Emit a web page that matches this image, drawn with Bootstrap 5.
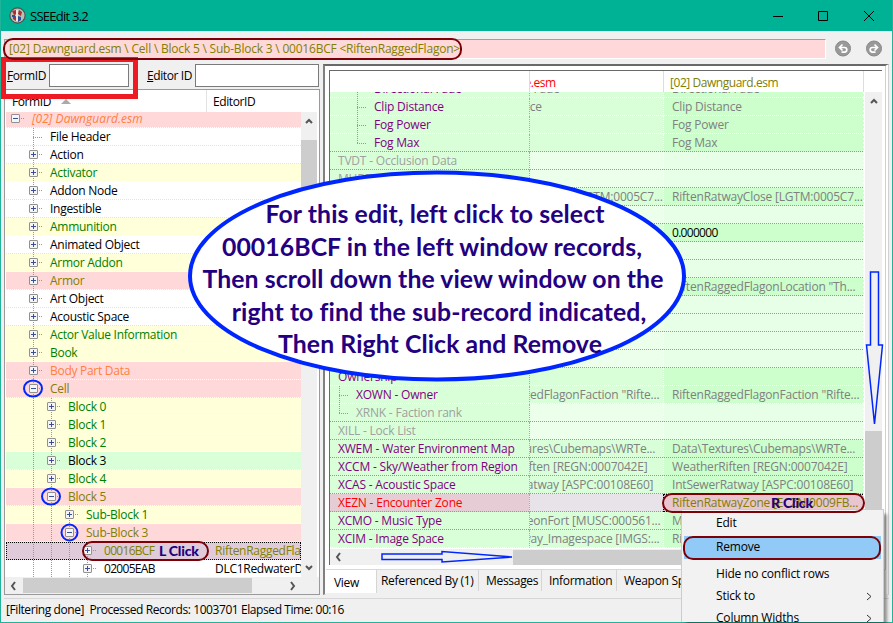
<!DOCTYPE html>
<html lang="en">
<head>
<meta charset="utf-8">
<title>SSEEdit 3.2</title>
<link rel="stylesheet" href="https://cdn.jsdelivr.net/npm/bootstrap@5.3.0/dist/css/bootstrap.min.css">
<style>
*{box-sizing:border-box}
body{width:893px;height:623px;overflow:hidden;background:#f0f0f0;font:12px/18px "Open Sans","Noto Sans",sans-serif;color:#000;letter-spacing:-.2px;white-space:nowrap}
.win{width:893px;height:623px;border:1px solid #1fb39a;border-top:0;background:#f0f0f0}
.titlebar{height:31px;background:#00b295;padding-left:8px;font-size:13px;flex:none;letter-spacing:-.75px}
.pathbar{height:31px;padding:8px 10px 0 3px;flex:none}
.pathfield{width:822px;height:20px;background:#ffd9d9;border-top:1px solid #a0a0a0;border-left:1px solid #a0a0a0;border-right:1px solid #fff;border-bottom:1px solid #fff;color:#808000;padding-left:4px;line-height:18px;letter-spacing:-.21px}
.leftcol{width:316px;margin-left:3px;flex:none}
.filters{height:27px;padding:2px 0 0 3px;letter-spacing:-.4px}
.inp{height:23px;background:#fff;border:1px solid #7a7a7a}
.treebox{height:506px;border:1px solid #9a9a9a;background:#fff;width:316px}
.treehead{height:22px;line-height:23px;padding-left:7px;letter-spacing:-.4px}
.treehead .c2{margin-left:auto;width:113px;border-left:1px solid #e2e2e2;padding-left:6px}
.tree{height:465px;width:296px;overflow:hidden;padding-left:1px;letter-spacing:-.28px}
.trow{height:18px;border-bottom:1px dotted #e4e4e4;overflow:hidden;line-height:18px}
.trow:first-child{margin-top:-2px;letter-spacing:.05px}
.trow.bg-s{outline:1px dotted #000;outline-offset:-1px}
.bg-y{background:#ffffd9}.bg-p{background:#ffd9d9}.bg-g{background:#d9ffd9}.bg-s{background:#dfcbd9}
.bg-p,.bg-g,.bg-y{border-bottom-color:#fff}
.t-g{color:#008000}.t-o{color:#808000}.t-c{color:#ff8040}.t-p{color:#800080}.t-r{color:#f00}.t-x{color:#a0a0a0}.t-d{color:#808080}
.hexid{letter-spacing:-.7px}
.guide{width:18px;height:18px;flex:none;background:repeating-linear-gradient(#999 0 1px,transparent 1px 2px) 9px 0/1px 18px no-repeat}
.guide.none{background:none}
.stub{width:8px;height:18px;flex:none}
.knobcell{position:relative}
.knobcell::after{content:"";display:block;width:5px;height:1px;margin:-5px 0 0 14px;background:repeating-linear-gradient(90deg,transparent 0 1px,#999 1px 2px)}
.leaf{background:repeating-linear-gradient(#999 0 1px,transparent 1px 2px) 9px 0/1px 18px no-repeat,repeating-linear-gradient(90deg,#999 0 1px,transparent 1px 2px) 9px 9px/9px 1px no-repeat}
.leaf.last{background-size:1px 9px,9px 1px}
.knob{width:9px;height:9px;margin:4px 0 0 5px;border:1px solid #919191;border-radius:1px;background:linear-gradient(#3a4f9a,#3a4f9a) 1px 3px/5px 1px no-repeat,linear-gradient(#3a4f9a,#3a4f9a) 3px 1px/1px 5px no-repeat,#f5f5f5}
.knob.minus{background:linear-gradient(#3a4f9a,#3a4f9a) 1px 3px/5px 1px no-repeat,#f5f5f5}
.tname{width:0;flex:1 1 0}
.tedit{width:86px;flex:none;overflow:hidden}
.sb{background:#f0f0f0;flex:none}
.thumb{background:#cdcdcd}
.rightcol{margin:2px 0 0 3px;width:566px;height:531px;border-top:2px solid #696969;border-left:2px solid #808080;background:#fff;padding:4px 0 0 4px;border-bottom:1px solid #ddd;border-right:4px double #d0d0d0}
.view{border-top:1px solid #696969;border-left:1px solid #696969;width:553px;height:495px}
.vhead{height:21px;line-height:23px;flex:none;letter-spacing:-.45px}
.rgrid{height:457px;width:535px;overflow:hidden}
.grow{height:18px;line-height:18px}
.grow:first-child{margin-top:-12px}
.grow>div{border-bottom:1px dotted #999;overflow:hidden;height:18px}
.grow.w>div{border-bottom-color:#fff}
.ga{width:199px;background:#d9ffd9;flex:none}
.ga .lbl{margin-left:8px}
.gb{width:134px;background:#d9ffd9;flex:none;border-left:1px dotted #aaa}
.gb span{margin-left:-58px}
.gc{width:202px;background:#cfc;flex:none;border-left:1px dotted #fff;border-right:2px dotted #fff;padding-left:8px}
.em .gb{background:#ebffeb}.em .gc{background:#e6ffe6}
.sel .ga{background:#e6ccd5}.sel .gb{background:#e8e2e9}.sel .gc{background:#e8c5cf;outline:1px dotted #000;outline-offset:-1px}
.tabs{height:26px;background:#f0f0f0;margin:4px 0 0 -3px;width:560px;border-top:1px solid #d9d9d9;letter-spacing:-.3px}
.tabs div{padding:1px 11px 0 7px;border-right:1px solid #d5d5d5;height:21px;line-height:20px}
.tabs .on{background:#fff;height:23px;width:51px;line-height:24px;padding-left:8px}
.status{height:24px;padding:0 2px;border-top:1px solid #d7d7d7;margin:3px 3px 0;line-height:21px;letter-spacing:-.42px}
.over{position:absolute;left:0;top:0;pointer-events:none}
.callout{position:absolute;left:190px;top:198px;width:490px;text-align:center;font:700 24.8px/32.5px Lato,sans-serif;color:#23007f;letter-spacing:.08px}
.callout span{display:block}
.click{position:absolute;font:900 14px/18px Lato,sans-serif;color:#23007f}
.menu{position:absolute;left:681px;top:509px;width:203px;height:113px;background:#f2f2f2;border:1px solid #ccc;border-bottom:0;box-shadow:4px 4px 3px -1px #0006;padding:2px;overflow:hidden}
.menu div{height:22px;line-height:22px;padding:0 9px 0 32px}
.menu .hot{background:#91c9f7;height:23px;line-height:22px;margin:2px 0 4px}
</style>
<script src="https://cdn.jsdelivr.net/npm/bootstrap@5.3.0/dist/js/bootstrap.bundle.min.js"></script>
</head>
<body>
<div class="win d-flex flex-column">
  <header class="titlebar d-flex align-items-center">
    <svg width="17" height="17" viewBox="0 0 17 17" class="me-1"><circle cx="8.5" cy="8.5" r="7.6" fill="#b9c0b8" stroke="#4c5750" stroke-width="1.2"/><path d="M3 4l4-1 1 4-3 1zM10 3l3 2-1 4-3-2zM4 10l3-1v5l-3-2z" fill="#b52b2b"/><path d="M9 9l3 1v3l-3 2zM3 8h3v2H3z" fill="#2b4f9c"/><path d="M7 3h2v11H7z" fill="#eee9da"/></svg>
    <span>SSEEdit 3.2</span>
    <svg class="ms-auto" style="margin-right:15px" width="104" height="12" viewBox="0 0 104 12" fill="none" stroke="#000"><path d="M0 6.500h10M45.500 1.500h9v9h-9zM91 1l10 10M101 1L91 11"/></svg>
  </header>
  <div class="pathbar d-flex">
    <div class="pathfield">[02] Dawnguard.esm \ Cell \ Block 5 \ Sub-Block 3 \ 00016BCF &lt;RiftenRaggedFlagon&gt;</div>
    <svg class="ms-auto" width="48" height="18" viewBox="0 0 48 18"><g fill="#999" stroke="#888"><circle cx="9" cy="9.500" r="7.500"/><circle cx="40" cy="9.500" r="7.500"/></g><g fill="none" stroke="#fff" stroke-width="1.700"><path d="M6.500 8.500h4a2.300 2.300 0 0 1 0 4.600h-3M8.500 5.500l-3 3 3 3M42.500 8.500h-4a2.300 2.300 0 0 0 0 4.600h3M40.500 5.500l3 3-3 3"/></g></svg>
  </div>
  <main class="d-flex">
    <section class="leftcol">
      <div class="filters d-flex">
        <span style="padding-top:3px;width:38px"><u>F</u>ormID</span><div class="inp" style="width:80px;margin-left:4px"></div>
        <span style="padding-top:3px;margin-left:18px"><u>E</u>ditor ID</span><div class="inp ms-auto" style="width:124px;margin-right:1px"></div>
      </div>
      <div class="treebox">
        <div class="treehead d-flex"><span>FormID</span><svg width="10" height="5" style="margin:9px 0 0 10px"><path d="M0 5L5 0l5 5z" fill="#aaa"/></svg><span class="c2">EditorID</span></div>
        <div class="d-flex">
          <div class="tree" id="tree"></div>
          <div class="sb d-flex flex-column align-items-center" style="width:16px;height:465px;margin-left:0">
            <svg width="8" height="6" style="margin-top:6px"><path d="M1 5l3-3 3 3" fill="none" stroke="#555" stroke-width="2"/></svg>
            <div class="thumb w-100" style="height:224px;margin-top:16px"></div>
            <svg class="mt-auto" width="8" height="6" style="margin-bottom:6px"><path d="M1 1l3 3 3-3" fill="none" stroke="#555" stroke-width="2"/></svg>
          </div>
        </div>
        <div class="sb d-flex align-items-center" style="height:17px"><svg width="7" height="10" style="margin-left:5px"><path d="M5 1L2 5l3 4" fill="none" stroke="#555" stroke-width="2"/></svg><div class="thumb" style="width:229px;height:15px;margin-left:6px"></div><svg width="7" height="10" style="margin-left:37px"><path d="M2 1l3 4-3 4" fill="none" stroke="#555" stroke-width="2"/></svg></div>
      </div>
    </section>
    <section class="rightcol">
      <div class="view">
        <div class="vhead d-flex"><div style="width:199px"></div><div class="t-r overflow-hidden" style="width:134px;border-left:1px solid #ddd"><span style="margin-left:-60px">[01] Update.esm</span></div><div class="t-o" style="width:201px;border-left:1px solid #ddd;border-right:1px solid #ddd;padding-left:6px">[02] Dawnguard.esm</div></div>
        <div class="d-flex">
          <div class="rgrid" id="rgrid"></div>
          <div class="sb d-flex flex-column align-items-center" style="width:17px;height:457px;margin-left:1px"><svg width="8" height="6" style="margin-top:6px"><path d="M1 5l3-3 3 3" fill="none" stroke="#555" stroke-width="2"/></svg><div class="thumb w-100" style="margin-top:327px;height:118px"></div></div>
        </div>
        <div class="sb d-flex align-items-center" style="height:16px"><svg width="7" height="10" style="margin-left:5px"><path d="M5 1L2 5l3 4" fill="none" stroke="#555" stroke-width="2"/></svg><div class="thumb" style="width:350px;height:15px;margin-left:171px"></div></div>
      </div>
      <div class="tabs d-flex"><div class="on">View</div><div style="padding-left:4px;width:102px">Referenced By (1)</div><div style="width:63px">Messages</div><div style="width:75px">Information</div><div>Weapon Spreadsheet</div></div>
    </section>
  </main>
  <footer class="status">[Filtering done]&nbsp; Processed Records: 1003701 Elapsed Time: 00:16</footer>
</div>

<svg class="over" width="893" height="623" fill="none">
  <rect x="3.500" y="59.500" width="132" height="37" stroke="#ed1c24" stroke-width="5"/>
  <rect x="4" y="39" width="457" height="20" rx="9" stroke="#7b0008" stroke-width="2"/>
  <ellipse cx="437" cy="276" rx="247" ry="103.500" fill="#fff" stroke="#0026ff" stroke-width="4"/>
  <g stroke="#0026ff" stroke-width="2"><ellipse cx="33" cy="388.500" rx="9" ry="8"/><ellipse cx="51" cy="496.500" rx="9" ry="8"/><ellipse cx="69.500" cy="532.500" rx="8" ry="8"/></g>
  <g stroke="#0026ff" stroke-width="1.500"><path d="M870.500 272h8v73h4l-8 79-8-79h4zM382 554h60v-2.500l70 5.500-70 5v-2.500h-60z"/></g>
  <rect x="83" y="542" width="125" height="18" rx="9" stroke="#7b0008" stroke-width="2"/>
</svg>
<div class="callout"><span>For this edit, left click to select</span><span style="margin-left:-6px">00016BCF in the left window records,</span><span style="margin-left:-4px">Then scroll down the view window on the</span><span style="margin-left:8px">right to find the sub-record indicated,</span><span style="margin-left:10px">Then Right Click and Remove</span></div>
<div class="click" style="left:159px;top:542px">L Click</div>
<div class="click" style="left:771px;top:494px">R Click</div>
<nav class="menu">
  <div>Edit</div><div class="hot">Remove</div><div>Hide no conflict rows</div>
  <div class="d-flex justify-content-between align-items-center">Stick to<svg width="6" height="9"><path d="M1 1l4 3.500L1 8" fill="none" stroke="#333"/></svg></div>
  <div class="d-flex justify-content-between align-items-center">Column Widths<svg width="6" height="9"><path d="M1 1l4 3.500L1 8" fill="none" stroke="#333"/></svg></div>
</nav>
<svg class="over" width="893" height="623" fill="none" stroke="#7b0008" stroke-width="2"><rect x="663" y="494" width="201" height="18" rx="9"/><rect x="684" y="537" width="196" height="22" rx="9"/></svg>

<script>
// level, knob (+, -, or blank), name, row background, text colour, editor id
const tree = [
 [0,'-','[02] Dawnguard.esm','bg-p','t-c fst-italic'],[1,'','File Header'],[1,'+','Action'],[1,'+','Activator','bg-y','t-g'],
 [1,'+','Addon Node'],[1,'+','Ingestible'],[1,'+','Ammunition','bg-y','t-g'],[1,'+','Animated Object'],
 [1,'+','Armor Addon','bg-y','t-g'],[1,'+','Armor','bg-p','t-o'],[1,'+','Art Object'],[1,'+','Acoustic Space'],
 [1,'+','Actor Value Information','bg-y','t-g'],[1,'+','Book','bg-y','t-g'],[1,'+','Body Part Data','bg-p','t-c'],
 [1,'-','Cell','bg-p','t-o'],[2,'+','Block 0','bg-y','t-g'],[2,'+','Block 1','bg-y','t-g'],[2,'+','Block 2','bg-y','t-g'],
 [2,'+','Block 3','bg-g',''],[2,'+','Block 4','bg-y','t-g'],[2,'-','Block 5','bg-p','t-o'],[3,'+','Sub-Block 1','bg-y','t-g'],
 [3,'-','Sub-Block 3','bg-p','t-o'],[4,'+','<span class="hexid">00016BCF</span>','bg-s','t-o','RiftenRaggedFlagon'],
 [4,'+','<span class="hexid">02005EAB</span>','','','DLC1RedwaterDen']
];
document.getElementById('tree').innerHTML = tree.map(([l,k,n,bg='',c='',e='']) => {
  let g = '';
  for (let i = 0; i < l; i++) g += `<span class="guide ${i ? '' : 'none'}"></span>`;
  g += k ? `<span class="guide knobcell ${l ? '' : 'none'}"><span class="knob d-block ${k === '-' ? 'minus' : ''}"></span></span>` : '<span class="guide leaf"></span>';
  return `<div class="trow d-flex ${bg} ${c}">${g}<span class="stub"></span><span class="tname">${n}</span><span class="tedit">${e}</span></div>`;
}).join('');
// row class, label colour, indent style, label, value, value shown in third column
const D = 'Directional Fade';
const rows = [
 ['w','t-p',2,D,D],['w','t-p',2,'Clip Distance','Clip Distance'],['w','t-p',2,'Fog Power','Fog Power'],['','t-p',3,'Fog Max','Fog Max'],
 ['em','t-x',0,'TVDT - Occlusion Data',''],['em','t-x',0,'MHDT - Max Height Data',''],
 ['','t-p',0,'','RiftenRatwayClose [LGTM:0005C7...'],['em','t-x',0,'',''],['','t-p',0,'','<span class="text-black hexid">0.000000</span>'],
 ['em','',0,'',''],['em','',0,'',''],['','t-p',0,'','RiftenRaggedFlagonLocation "Th...'],['em','',0,'',''],['em','',0,'',''],['em','',0,'',''],['em','',0,'',''],
 ['w','t-p',0,'Ownership',''],['w','t-p',1,'XOWN - Owner','RiftenRaggedFlagonFaction "Rifte...'],['em','t-x',4,'XRNK - Faction rank',''],
 ['em','t-x',0,'XILL - Lock List',''],['','t-p',0,'XWEM - Water Environment Map','Data\\Textures\\Cubemaps\\WRTe...'],
 ['','t-p',0,'XCCM - Sky/Weather from Region','WeatherRiften [REGN:0007042E]'],['','t-p',0,'XCAS - Acoustic Space','IntSewerRatway [ASPC:00108E60]'],
 ['sel','t-r',0,'XEZN - Encounter Zone','','<span class="t-o">RiftenRatwayZone [ECZN:0009FB...</span>'],
 ['','t-p',0,'XCMO - Music Type','MUSDungeonFort [MUSC:000561...'],['w','t-p',0,'XCIM - Image Space','RiftenRatway_Imagespace [IMGS:...']
];
document.getElementById('rgrid').innerHTML = rows.map(([r,c,i,n,v,w]) => {
  const none = '<span class="guide none"></span>', leaf = '<span class="guide leaf"></span>', last = '<span class="guide leaf last"></span>';
  const g = ['', leaf, none + leaf, none + last, last][i];
  return `<div class="grow d-flex ${r}"><div class="ga d-flex ${c}">${g}<span class="lbl">${n}</span></div><div class="gb t-d"><span>${v}</span></div><div class="gc t-d">${w || v}</div></div>`;
}).join('');
</script>
</body>
</html>
